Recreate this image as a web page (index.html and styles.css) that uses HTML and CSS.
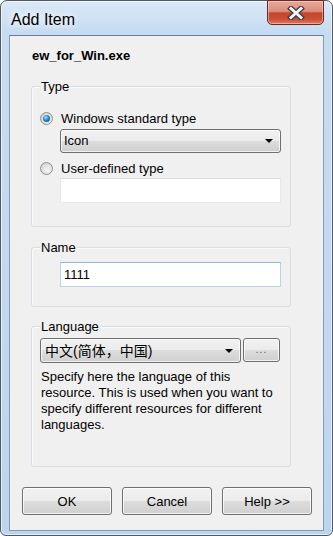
FILE: index.html
```html
<!DOCTYPE html>
<html>
<head>
  <title>Add Item</title>
  <link rel="stylesheet" href="styles.css">
</head>
<body>
  <div class="window">
    <div class="titlebar">
      <span class="title">Add Item</span>
      <div class="close-btn">
        <svg width="18" height="14" viewBox="0 0 18 14">
          <path d="M4 2.5 L14 11.5 M14 2.5 L4 11.5" stroke="#3b3f48" stroke-width="5.5" stroke-linecap="square" fill="none"/>
          <path d="M4 2.5 L14 11.5 M14 2.5 L4 11.5" stroke="#f4f4f4" stroke-width="3" stroke-linecap="square" fill="none"/>
        </svg>
      </div>
    </div>

    <div class="client">
      <div class="file-name">ew_for_Win.exe</div>

      <div class="group group-type">
        <div class="group-title">Type</div>
        <div class="radio-row first">
          <span class="radio checked"><span class="dot"></span></span>
          <span>Windows standard type</span>
        </div>
        <div class="combo type-combo">
          <span class="combo-text">Icon</span>
          <span class="arrow"></span>
        </div>
        <div class="radio-row second">
          <span class="radio"></span>
          <span>User-defined type</span>
        </div>
        <div class="edit type-edit"></div>
      </div>

      <div class="group group-name">
        <div class="group-title">Name</div>
        <div class="edit name-edit focused">1111</div>
      </div>

      <div class="group group-lang">
        <div class="group-title">Language</div>
        <div class="lang-row">
          <div class="combo lang-combo">
            <span class="combo-text cjk">中文(简体，中国)</span>
            <span class="arrow"></span>
          </div>
          <div class="dots-btn">...</div>
        </div>
        <p class="description">Specify here the language of this resource. This is used when you want to specify different resources for different languages.</p>
      </div>

      <div class="buttons">
        <div class="btn">OK</div>
        <div class="btn">Cancel</div>
        <div class="btn">Help &gt;&gt;</div>
      </div>
    </div>
  </div>
</body>
</html>
```

FILE: styles.css
```css
body {
  margin: 0;
  font-family: "Liberation Sans", Arial, sans-serif;
  font-size: 13px;
  color: #000;
}
.window {
  width: 333px;
  height: 536px;
  box-sizing: border-box;
  border: 1px solid #4f5a67;
  border-radius: 7px 7px 6px 6px;
  background: linear-gradient(180deg, #dce9f7 0%, #c6dcf2 30px, #bcd5ef 100%);
  box-shadow: inset 0 0 0 1px rgba(255, 255, 255, 0.6);
  padding: 0 8px 4px 8px;
  display: flex;
  flex-direction: column;
}
.titlebar {
  height: 34px;
  display: flex;
  align-items: flex-start;
}
.title {
  padding: 9px 0 0 2px;
  font-size: 16px;
  line-height: 20px;
  color: #000;
  text-shadow: 0 0 6px #fff, 0 0 10px #fff;
}
.close-btn {
  margin-left: auto;
  margin-top: -1px;
  width: 57px;
  height: 25px;
  box-sizing: border-box;
  border: 1px solid #6b2a20;
  border-radius: 0 0 5px 5px;
  background: linear-gradient(180deg, #e6aa9c 0%, #db8c7b 45%, #c4452c 52%, #cc5035 80%, #e07c62 100%);
  box-shadow: inset 0 0 0 1px rgba(255, 220, 210, 0.5);
  display: flex;
  align-items: center;
  justify-content: center;
}
.client {
  flex: 1;
  background: #f0f0f0;
  border: 1px solid #8a9bb0;
  border-top-color: #6d7c8e;
  padding: 12px 0 0 21px;
}
.file-name {
  font-weight: bold;
  line-height: 15px;
  padding-left: 1px;
}
.group {
  width: 260px;
  box-sizing: border-box;
  border: 1px solid #d5dfe5;
  border-radius: 3px;
  box-shadow: inset 1px 1px 0 #fafafa;
}
.group-title {
  width: max-content;
  margin: -8px 0 0 8px;
  padding: 0 1px;
  line-height: 15px;
  background: #f0f0f0;
}
.group-type {
  margin-top: 23px;
  padding-bottom: 23px;
}
.group-name {
  margin-top: 20px;
  padding-bottom: 19px;
}
.group-lang {
  margin-top: 19px;
  padding-bottom: 33px;
}
.radio-row {
  display: flex;
  align-items: center;
  height: 15px;
  margin-left: 8px;
}
.radio-row.first {
  margin-top: 17px;
}
.radio-row.second {
  margin-top: 8px;
}
.radio {
  width: 13px;
  height: 13px;
  box-sizing: border-box;
  border: 1px solid #8f8f8f;
  border-radius: 50%;
  background: radial-gradient(circle at 60% 65%, #f6f6f6 0%, #e0e0e0 50%, #c9c9c9 100%);
  margin-right: 8px;
  display: flex;
  align-items: center;
  justify-content: center;
}
.dot {
  width: 7px;
  height: 7px;
  border-radius: 50%;
  background: radial-gradient(circle at 40% 35%, #b6e6ff 0%, #3a9ae0 35%, #12589d 75%, #0b3d72 100%);
}
.combo {
  box-sizing: border-box;
  border: 1px solid #707070;
  border-radius: 3px;
  background: linear-gradient(180deg, #f2f2f2 0%, #ebebeb 50%, #dddddd 50%, #cfcfcf 100%);
  box-shadow: inset 0 0 0 1px rgba(255, 255, 255, 0.7);
  display: flex;
  align-items: center;
  justify-content: space-between;
  padding: 0 7px 0 3px;
}
.type-combo {
  margin: 3px 0 0 28px;
  width: 221px;
  height: 24px;
}
.combo-text {
  line-height: 22px;
}
.cjk {
  font-family: "Liberation Sans", "Noto Sans CJK SC", sans-serif;
  font-size: 14px;
  padding-left: 1px;
}
.arrow {
  width: 0;
  height: 0;
  border-left: 4px solid transparent;
  border-right: 4px solid transparent;
  border-top: 4px solid #000;
}
.edit {
  box-sizing: border-box;
  width: 221px;
  height: 25px;
  margin-left: 28px;
  background: #fff;
  border: 1px solid #e3e9ef;
  border-top-color: #abadb3;
  border-left-color: #e2e3ea;
  border-right-color: #dbdfe6;
  padding-left: 3px;
  line-height: 23px;
}
.type-edit {
  margin-top: 2px;
  border-color: #e3e9ef;
  border-top-color: #d9dde3;
}
.name-edit {
  margin-top: 7px;
}
.edit.focused {
  border-color: #b5d3ee;
  border-top-color: #8fb6de;
}
.lang-row {
  display: flex;
  gap: 2px;
  margin: 4px 0 0 8px;
}
.lang-combo {
  width: 201px;
  height: 25px;
}
.dots-btn {
  width: 37px;
  height: 24px;
  box-sizing: border-box;
  border: 1px solid #707070;
  border-radius: 3px;
  background: linear-gradient(180deg, #f2f2f2 0%, #ebebeb 50%, #dddddd 50%, #cfcfcf 100%);
  box-shadow: inset 0 0 0 1px rgba(255, 255, 255, 0.7);
  text-align: center;
  font-size: 10px;
  line-height: 22px;
  color: #555;
  letter-spacing: 1px;
}
.description {
  margin: 6px 0 0 9px;
  width: 242px;
  line-height: 16px;
}
.buttons {
  display: flex;
  gap: 10px;
  margin: 20px 0 0 -9px;
}
.btn {
  width: 90px;
  height: 28px;
  box-sizing: border-box;
  border: 1px solid #707070;
  border-radius: 3px;
  background: linear-gradient(180deg, #f2f2f2 0%, #ebebeb 50%, #dddddd 50%, #cfcfcf 100%);
  box-shadow: inset 0 0 0 1px rgba(255, 255, 255, 0.75);
  display: flex;
  align-items: center;
  justify-content: center;
}
```
